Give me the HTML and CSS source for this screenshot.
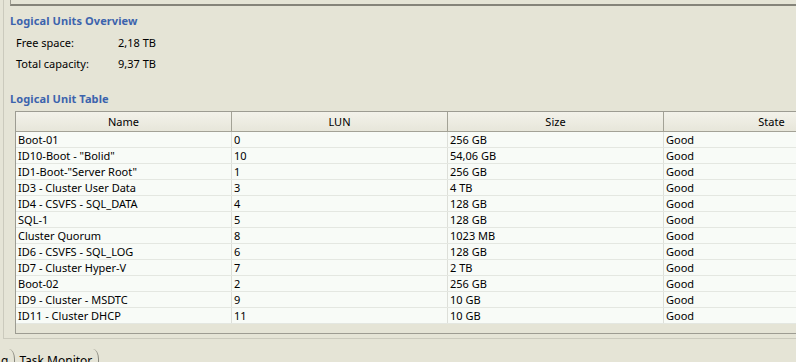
FILE: index.html
```html
<!DOCTYPE html>
<html lang="en">
<head>
  <meta charset="UTF-8" />
  <title>Logical Units</title>
  <link rel="stylesheet" href="styles.css">
</head>
<body>

<div class="section">
  <div class="prev-frame"></div>

  <h2 class="heading">Logical Units Overview</h2>
  <div class="props">
    <span>Free space:</span><span>2,18 TB</span>
    <span>Total capacity:</span><span>9,37 TB</span>
  </div>

  <h2 class="heading heading-table">Logical Unit Table</h2>
  <div class="lun-table">
    <div class="row head">
      <div class="cell">Name</div>
      <div class="cell">LUN</div>
      <div class="cell">Size</div>
      <div class="cell">State</div>
    </div>
    <div id="rows"></div>
    <div class="filler"></div>
  </div>
</div>

<div class="tabs">
  <span class="tab tab-cut">g</span>
  <span class="tab">Task Monitor</span>
</div>

<script>
  const luns = [
    ['Boot-01', '0', '256 GB'],
    ['ID10-Boot - "Bolid"', '10', '54,06 GB'],
    ['ID1-Boot-"Server Root"', '1', '256 GB'],
    ['ID3 - Cluster User Data', '3', '4 TB'],
    ['ID4 - CSVFS - SQL_DATA', '4', '128 GB'],
    ['SQL-1', '5', '128 GB'],
    ['Cluster Quorum', '8', '1023 MB'],
    ['ID6 - CSVFS - SQL_LOG', '6', '128 GB'],
    ['ID7 - Cluster Hyper-V', '7', '2 TB'],
    ['Boot-02', '2', '256 GB'],
    ['ID9 - Cluster - MSDTC', '9', '10 GB'],
    ['ID11 - Cluster DHCP', '11', '10 GB']
  ];

  const rows = document.getElementById('rows');
  luns.forEach(lun => {
    const row = document.createElement('div');
    row.className = 'row';
    [...lun, 'Good'].forEach(text => {
      const cell = document.createElement('div');
      cell.className = 'cell';
      cell.textContent = text;
      row.appendChild(cell);
    });
    rows.appendChild(row);
  });
</script>

</body>
</html>
```

FILE: styles.css
```css
body {
  margin: 0;
  height: 362px;
  overflow: hidden;
  background-color: #e5e4d6;
  font-family: "Noto Sans", sans-serif;
  font-size: 11px;
  color: #000;
}

.section {
  margin-left: 3px;
  height: 338px;
  border-left: 1px solid #cbcabd;
  border-bottom: 1px solid #cbcabd;
  overflow: hidden;
}

.prev-frame {
  margin-left: 6px;
  height: 4px;
  border-left: 1px solid #9a998e;
  border-bottom: 2px solid #85847a;
  box-shadow: 0 -2px 0 -1px #d6d5c8;
}

.heading {
  margin: 7px 0 0 6px;
  font-size: 11px;
  letter-spacing: 0.1px;
  line-height: 16px;
  font-weight: bold;
  color: #3c63ad;
}

.heading-table {
  margin-top: 17px;
}

.props {
  display: grid;
  grid-template-columns: 102px auto;
  grid-auto-rows: 21px;
  align-items: center;
  margin: 3px 0 0 12px;
}

.lun-table {
  margin: 4px 0 0 11px;
  width: 900px;
  border: 1px solid #9d9c92;
  border-right: none;
}

.row {
  display: grid;
  grid-template-columns: 216px 216px 216px 216px;
  height: 16px;
  background-color: #f8fbf7;
  border-bottom: 1px solid #e4e7e1;
  box-sizing: border-box;
}

.cell {
  padding-left: 2px;
  border-right: 1px solid #dddfd9;
  line-height: 15px;
  white-space: nowrap;
  overflow: hidden;
}

.row.head {
  height: 20px;
  background: linear-gradient(#f3f2ea, #e7e6da);
  border-bottom: 1px solid #a3a296;
}

.row.head .cell {
  padding-left: 0;
  text-align: center;
  line-height: 19px;
  border-right-color: #a3a296;
}

.filler {
  height: 9px;
}

.tabs {
  display: flex;
  margin-top: 10px;
  height: 20px;
}

.tab {
  padding: 4px 6px 0 4px;
  border-right: 1px solid #8a897f;
  border-top-right-radius: 6px 10px;
  line-height: 15px;
  font-size: 12px;
}

.tab-cut {
  margin-left: -3px;
  padding-right: 6px;
}
```
